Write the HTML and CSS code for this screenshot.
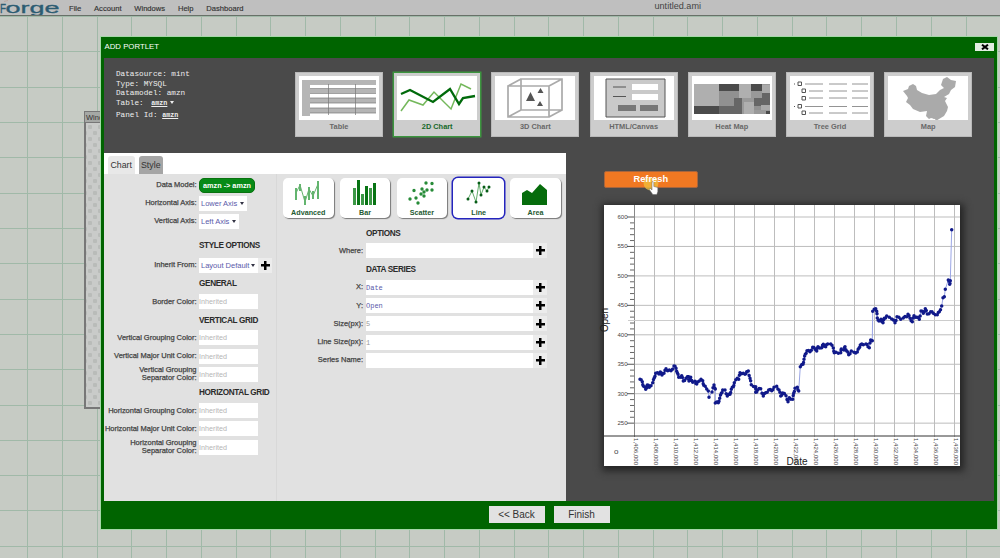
FILE: index.html
```html
<!DOCTYPE html>
<html lang="en">
<head>
<meta charset="utf-8">
<title>untitled.ami</title>
<link rel="stylesheet" href="styles.css">
</head>
<body>
<div class="desktop">
  <header class="menubar">
    <svg class="logo" width="62" height="15" viewBox="0 0 62 15"><text x="0" y="12.500" textLength="6" lengthAdjust="spacingAndGlyphs" class="logo-f">F</text><text x="5.500" y="13" textLength="54" lengthAdjust="spacingAndGlyphs">orge</text><path d="M4 1.500l4-1" stroke="#b87858"/></svg>
    <nav class="menu"><span>File</span><span>Account</span><span>Windows</span><span>Help</span><span>Dashboard</span></nav>
    <span class="doc-name">untitled.ami</span>
  </header>

  <section class="back-window"><div class="back-title">Window</div><div class="back-body"></div></section>

  <main class="dialog">
    <div class="dialog-head"><span>ADD PORTLET</span><button class="close"><svg width="8" height="6" viewBox="0 0 8 6"><path d="M1 .7L7 5.3M7 .7L1 5.3" stroke="#000" stroke-width="2"/></svg></button></div>
    <div class="dialog-body">
      <div class="top">
        <div class="source">
          <div>Datasource: mint</div>
          <div>Type: MYSQL</div>
          <div>Datamodel: amzn</div>
          <div>Table: <b class="table-name">amzn</b> <i class="tri"></i></div>
          <div class="panel-id">Panel Id: <b>amzn</b></div>
        </div>
        <div class="cards">
          <div class="card"><svg viewBox="0 0 80 44"><g fill="#b5b5b5"><path d="M3 4h74v5H3zM3 4h8v36H3zM11 13h66v4H11zM11 22h66v5H11zM11 32h66v5H11z"/></g><path d="M11 12.500h66M11 17.500h66M11 22h66M11 27h66M11 32h66M11 37h66M29.500 8v31M56.500 8v31" stroke="#777" stroke-width=".7"/></svg><span>Table</span></div>
          <div class="card selected"><svg viewBox="0 0 80 44"><g fill="none"><path d="M4 35L12 24L26 29L37 16L54 33L64 8L74 13" stroke="#75b85c" stroke-width="1.500"/><path d="M4 18L13 14L36 26L53 13L62 28L66 22L78 20" stroke="#006a0b" stroke-width="2.300"/></g></svg><span>2D Chart</span></div>
          <div class="card"><svg viewBox="0 0 80 44"><g fill="none" stroke="#aaa" stroke-width="1.700"><path d="M13 10H54V41H13zM26 3H67V34H26zM13 10L26 3M54 10L67 3M13 41L26 34M54 41L67 34"/></g><path d="M31 25l4.500-9 4.500 9zM42.500 17l3-5 3 5zM42 30l3-5 3 5z" fill="#555"/></svg><span>3D Chart</span></div>
          <div class="card"><svg viewBox="0 0 80 44"><path d="M12 3H71V41H12z" fill="#c9c9c9" stroke="#555"/><path d="M38 8h26v6H38zM38 18h26v6H38z" fill="#fff"/><path d="M19 11h13M19 20.500h13" stroke="#555" stroke-width="1.200"/><path d="M24 29h18v6H24zM46 29h18v6H46z" fill="#777"/></svg><span>HTML/Canvas</span></div>
          <div class="card"><svg viewBox="0 0 80 44"><path d="M2 8H78V38H2z" fill="#999"/><path d="M2 8H27V30H2zM47 8H59V22H47zM52 26h10v12H52z" fill="#afafaf"/><path d="M27 8H47V15H27zM59 8H70V15H59zM2 30H27V38H2zM74 35h4v3h-4z" fill="#4b4b4b"/><path d="M27 30H42V22H50V38H27zM62 22H70V17H78V30H62z" fill="#666"/><path d="M27 15h20v7h-5v8H27zM62 30h7v4h-7z" fill="#919191"/><path d="M70 9h8v8h-8zM69 29h9v5h-9z" fill="#aaa"/></svg><span>Heat Map</span></div>
          <div class="card"><svg viewBox="0 0 80 44"><g fill="none" stroke="#555"><path d="M8 6h3.500v3.500H8zM12 13h3.500v3.500H12zM12 20.500h3.500V24H12zM8 28.500h3.500V32H8zM12 35h3.500v3.500H12z"/><path d="M4 8h1M4 30.500h1"/><path d="M15 8h18M39 8h18M62 8h16M19 15h14M39 15h18M62 15h16M19 22h14M39 22h18M62 22h16M15 30.500h18M39 30.500h18M62 30.500h16M19 37h14M39 37h18M62 37h16" stroke="#888" stroke-width=".9"/></g></svg><span>Tree Grid</span></div>
          <div class="card"><svg viewBox="0 0 80 44"><path d="M15 15l5-2 1-3 4-2 3 2 1 4 5 3 7 2 7-1 4-4 4-2-3-3 1-3 1-3 4-2 4 3 5 1-1 6-4 3-2 4-5 3 3 1-2 3 3 6-1 4-3 5-5 3-3 2-1-2-4-1-2 1-3-3 1-5-7 1-7-3-3-4-4-3 2-4-1-2z" fill="#aaa"/><circle cx="46" cy="41.500" r="1.200" fill="#aaa"/></svg><span>Map</span></div>
        </div>
      </div>

      <div class="lower">
        <div class="editor">
          <div class="tabs"><span class="tab active">Chart</span><span class="tab">Style</span></div>
          <div class="forms">
            <div class="form form-left">
              <div class="row"><label>Data Model:</label><span class="pill">amzn -&gt; amzn</span></div>
              <div class="row"><label>Horizontal Axis:</label><span class="select w-lower">Lower Axis<i class="tri"></i></span></div>
              <div class="row"><label>Vertical Axis:</label><span class="select w-leftaxis">Left Axis<i class="tri"></i></span></div>
              <h3 class="first">STYLE OPTIONS</h3>
              <div class="row"><label>Inherit From:</label><span class="select w-layout">Layout Default<i class="tri"></i></span><span class="plus"></span></div>
              <h3>GENERAL</h3>
              <div class="row"><label>Border Color:</label><span class="field color">Inherited</span></div>
              <h3>VERTICAL GRID</h3>
              <div class="row"><label>Vertical Grouping Color:</label><span class="field color">Inherited</span></div>
              <div class="row"><label>Vertical Major Unit Color:</label><span class="field color">Inherited</span></div>
              <div class="row"><label>Vertical Grouping<br>Separator Color:</label><span class="field color">Inherited</span></div>
              <h3>HORIZONTAL GRID</h3>
              <div class="row"><label>Horizontal Grouping Color:</label><span class="field color">Inherited</span></div>
              <div class="row"><label>Horizontal Major Unit Color:</label><span class="field color">Inherited</span></div>
              <div class="row"><label>Horizontal Grouping<br>Separator Color:</label><span class="field color">Inherited</span></div>
            </div>
            <div class="form form-right">
              <div class="types">
                <div class="type"><svg viewBox="0 0 30 26"><path d="M3 9v12M7 5v7M12 17v10M16 8v13M20 12v8M25 2v18" stroke="#3ca34b" stroke-width="1.600"/><path d="M3 14L7 6L12 23L16 10L20 17L25 5" stroke="#65b36e" fill="none"/></svg><span>Advanced</span></div>
                <div class="type"><svg viewBox="0 0 30 26"><path d="M3 9h3v17H3zM11 15h3v11h-3zM19 9h3v17h-3z" fill="#3c9846"/><path d="M7 1h3v25H7zM15 7h3v19h-3zM23 4h3v22h-3z" fill="#087414"/></svg><span>Bar</span></div>
                <div class="type"><svg viewBox="0 0 30 26"><path d="M3 20h0M7 11.500h0M9 19h0M11 24h0M14 15h0M17 13h0M15 10h0M19 4h0M25 4.500h0M20 11h0M25 11h0M17 17h0" stroke="#278b38" stroke-width="3.400" stroke-linecap="round"/></svg><span>Scatter</span></div>
                <div class="type selected"><svg viewBox="0 0 30 26"><path d="M4 20L8 12L12 23L15 4L17 16L20 8L23 12L25 8" fill="none" stroke="#63ad6b"/><path d="M4 20h0M8 12h0M12 23h0M15 4h0M17 16h0M20 8h0M23 12h0M25 8h0" stroke="#075c17" stroke-width="3" stroke-linecap="round"/></svg><span>Line</span></div>
                <div class="type"><svg viewBox="0 0 30 26"><path d="M2 26V14L7 11L12 14L20 5L27 11V26z" fill="#066c0c"/></svg><span>Area</span></div>
              </div>
              <h3 class="options">OPTIONS</h3>
              <div class="row"><label>Where:</label><span class="field wide"></span><span class="plus"></span></div>
              <h3 class="series">DATA SERIES</h3>
              <div class="row"><label>X:</label><span class="field wide">Date</span><span class="plus"></span></div>
              <div class="row"><label>Y:</label><span class="field wide">Open</span><span class="plus"></span></div>
              <div class="row"><label>Size(px):</label><span class="field wide dim">5</span><span class="plus"></span></div>
              <div class="row"><label>Line Size(px):</label><span class="field wide dim">1</span><span class="plus"></span></div>
              <div class="row"><label>Series Name:</label><span class="field wide"></span><span class="plus"></span></div>
            </div>
          </div>
        </div>
        <div class="preview">
          <button class="refresh"><span>Refresh</span><svg class="cursor" width="20" height="20" viewBox="0 0 20 20"><circle cx="8" cy="5" r="7.500" fill="#f2c23c" opacity=".75"/><path d="M9 4q1.500-1 1.800.5v4l4 1v4l-1 3h-4l-3.500-5 1-1 1.700 1.500z" fill="#fff" stroke="#666" stroke-width=".5"/></svg></button>
          <svg class="chart" id="chart" width="356" height="261" viewBox="604 205 356 261"></svg>
        </div>
      </div>
    </div>
    <footer class="dialog-foot"><button>&lt;&lt; Back</button><button>Finish</button></footer>
  </main>
</div>
<script src="chart.js"></script>
</body>
</html>
```
FILE: styles.css
```css
* { box-sizing: border-box; }
body { margin: 0; font-family: "Liberation Sans", Arial, sans-serif; font-size: 7.5px; color: #333; }
button { border: 0; padding: 0; font: inherit; color: inherit; }
.desktop {
  position: relative; width: 1000px; height: 558px; overflow: hidden;
  background:
    repeating-linear-gradient(90deg, #a0b9a8 0 1px, transparent 1px 34.76px) 27.300px 0,
    repeating-linear-gradient(180deg, #a0b9a8 0 1px, transparent 1px 35.32px) 0 16px,
    #c6cbc4;
  background-repeat: no-repeat;
  background-size: 1000px 558px;
}
.menubar { display: flex; height: 16px; background: #bfbfbf; border-bottom: 1px solid #687068; }
.logo { flex: none; font-size: 15px; fill: #2c5c72; stroke: #2c5c72; stroke-width: .3px; }
.logo-f { font-size: 13px; }
.menu { display: flex; gap: 12.800px; padding: 3.500px 0 0 7px; line-height: 9px; width: 592.500px; font-size: 7.600px; -webkit-text-stroke: .15px #333; }
.doc-name { font-size: 9.100px; line-height: 13px; color: #444; }

.back-window { position: absolute; left: 84px; top: 111px; width: 40px; height: 298px; background: #a5a8a5; border: 1px solid #777; }
.back-title { height: 10px; padding-left: 1px; line-height: 11px; }
.back-body { height: 286px; border: 1px solid #777; background: radial-gradient(circle at 4px 4px, #b9bcb9 2px, transparent 2.500px) 0 0 / 10px 12px, radial-gradient(circle at 4px 4px, #b9bcb9 2px, transparent 2.500px) 5px 6px / 10px 12px, #c9cbc9; }

.dialog { position: absolute; left: 101px; top: 37px; width: 896px; height: 491.500px; background: #006400; box-shadow: 0 0 0 1px #a5d8a8; display: flex; flex-direction: column; padding: 0 3px; }
.dialog-head { height: 21px; display: flex; justify-content: space-between; align-items: center; padding: 0 0 2px .5px; color: #fff; font-size: 7.800px; }
.close { width: 19px; height: 8px; margin-top: 1px; background: #e2eee2; display: flex; align-items: center; justify-content: center; }
.dialog-body { height: 443px; background: #4a4a4a; display: flex; flex-direction: column; }
.dialog-foot { flex: 1; display: flex; justify-content: center; gap: 9px; padding: 5px 0 0 0; }
.dialog-foot button { width: 56px; height: 17px; background: #e2e2e2; font-size: 10px; }

.top { height: 94.500px; display: flex; }
.source { width: 187px; padding: 12px 0 0 12px; font: 7.700px/9.500px "Liberation Mono", monospace; color: #eee; white-space: nowrap; }
.source b { font-size: 6.700px; line-height: 8px; text-decoration: underline; }
.source .table-name { margin-left: 3px; }
.panel-id { margin-top: 3px; }
.tri { display: inline-block; border: 2px solid transparent; border-top: 3px solid currentColor; border-bottom: 0; vertical-align: 1px; }
.source .tri { margin-left: -2px; }
.cards { display: flex; gap: 10.200px; padding: 14px 0 0 4px; }
.card { width: 88px; height: 65px; padding: 3px 4px 0; background: #cdcdcd; border: 1px solid #b9b9b9; display: flex; flex-direction: column; text-align: center; font-size: 7.400px; font-weight: bold; color: #686868; }
.card svg { width: 80px; height: 44px; margin-left: -1px; background: #fff; flex: none; }
.card span { line-height: 13px; }
.card.selected { border-color: #3c953f; box-shadow: 0 0 0 .5px #3c953f; color: #16682a; }

.lower { flex: 1; display: flex; }
.editor { width: 462px; background: #e1e1e1; }
.tabs { height: 21.500px; background: #fff; display: flex; gap: 3.500px; padding: 3.500px 0 0 3.500px; }
.tab { height: 18px; width: 27.500px; background: #a5a5a5; border-radius: 3px 3px 0 0; text-align: center; font-size: 8.800px; line-height: 19px; }
.tab + .tab { width: 24.500px; }
.tab.active { background: #e8e8e8; }
.forms { display: flex; height: 327px; }
.form-left { width: 173px; padding-top: 2px; border-right: 1px solid #d8d8d8; }
.form-right { width: 288px; padding-top: 4px; }
.row { display: flex; align-items: center; height: 18.200px; }
.row label { flex: none; width: 92.500px; margin-right: 2.500px; display: flex; justify-content: flex-end; text-align: right; line-height: 8px; white-space: nowrap; font-size: 7.500px; letter-spacing: -.02px; color: #3d3d3d; -webkit-text-stroke: .25px #484848; }
.form-right .row label { width: 86px; margin-right: 3px; }
.form h3 { margin: 0; height: 18.200px; padding: 2px 0 0 95px; font-size: 8.200px; line-height: 16px; font-weight: bold; color: #2b2b2b; letter-spacing: -.35px; white-space: nowrap; }
.form h3.first { height: 25.500px; padding-top: 7px; }
.form-right h3 { padding-left: 89px; }
.form h3.options { height: 23.500px; padding-top: 8px; }
.form h3.series { height: 18.700px; padding-top: 2px; }
.pill { height: 15px; width: 56px; border-radius: 5px; background: #078a17; border: 1px solid #08720f; color: #fff; font-size: 7.300px; font-weight: bold; text-align: center; line-height: 13px; }
.select { height: 15px; background: #fff; color: #5a5aaa; font-size: 7.500px; line-height: 15px; padding: 0 3px 0 2px; display: flex; justify-content: space-between; align-items: center; white-space: nowrap; }
.select .tri { color: #334; }
.w-lower { width: 48px; }
.w-leftaxis { width: 40px; }
.w-layout { width: 59px; }
.field { height: 15px; background: #fff; line-height: 15px; }
.color { width: 59px; color: #b5b5b5; font-size: 7.200px; }
.wide { width: 167px; color: #5a5aaa; font: 7px/16px "Liberation Mono", monospace; }
.dim { color: #999; }
.plus { width: 14px; height: 15px; background: linear-gradient(#000, #000) center / 9px 2.500px no-repeat, linear-gradient(#000, #000) center / 2.500px 9px no-repeat, #ececec; }
.types { display: flex; gap: 6.300px; padding-left: 6px; height: 40px; }
.type { width: 50.500px; height: 39.500px; background: #fff; border-radius: 5px; box-shadow: 1px 1px 1px #777; display: flex; flex-direction: column; align-items: center; padding-top: 1px; font-weight: bold; color: #245a31; font-size: 7.200px; }
.type svg { width: 30px; height: 26px; flex: none; }
.type span { line-height: 15px; }
.type.selected { box-shadow: 0 0 0 1.500px #2525bd; }

.preview { padding: 18.500px 0 0 38px; display: flex; flex-direction: column; align-items: flex-start; }
.refresh { position: relative; width: 93.500px; height: 17px; background: #f07822; border: 1px solid #a7653d; border-radius: 2px; color: #fff; font-size: 9.300px; font-weight: bold; line-height: 15px; }
.cursor { position: absolute; left: 38px; top: 6px; }
.refresh span { position: relative; z-index: 1; }
.chart { margin-top: 17px; background: #fff; box-shadow: 1px 2px 7px 3px #252525; overflow: visible; }
.chart .tick { font-size: 6px; fill: #444; }
.chart .origin { font-size: 8px; fill: #444; }
.chart .name { font-size: 10px; fill: #222; }
```
FILE: chart.js
```js
// Each run holds consecutive readings; runs are joined by a thin line only.
const runs = [
  [[640,379.3],[642.3,381.7],[643.3,386],[645.7,389.3],[647.3,385],[649.3,387.3],[652.7,382.7],[654.3,377.7],[655.7,373.3],[659,374],[660.3,372],[662,375],[664,373.3],[666,368.7],[667.7,370.7],[671,370.7],[674,366],[676,368.3],[677.3,372.7],[678.7,377.3],[681.7,375.7],[683.3,381],[686,378.3],[688.7,376.7],[689,381],[690.7,377.3],[692.7,382.3],[695,381.3],[696.7,384],[699.3,381],[701,379.3],[702.7,380.7],[703.7,385.3],[706.7,389],[708.3,391]],
  [[709,397.3]],
  [[712,392],[714,385],[715.3,389]],
  [[715.3,403],[718.3,402.7],[719.7,398.3],[721.3,393.3],[722.7,390],[725,390],[727.3,396],[730,394.3],[731.3,389.3],[733.3,386.7],[734.3,382.7],[737.3,378.3],[738.7,379.3],[740,372.7],[743.3,373.3],[745,374.3],[746.7,371.7],[748.3,371],[750,378.3],[751.3,384.7],[755.7,386.7],[755.7,392.3],[757.7,390],[760.7,388.7],[763.3,396],[765.7,392.7],[768.7,390],[771.7,390.7],[774,387.3],[776.7,386.3],[779,390],[780.7,396],[782.7,393],[786,395.7],[788,401.7],[789.3,397.7],[792.7,399.3],[793.7,393.3],[795,388.3],[797.3,387.3],[798.7,391]],
  [[800.3,366.7],[803,364.3],[804,359.3],[805.3,354.3],[807,350.7],[810,351.7],[812.7,347.3],[815,349.3],[816.7,351],[818,346.7],[821.7,347.7],[823.3,344.3],[825.7,346.7],[827.7,344],[830.7,344],[833.3,348],[834.3,352.7],[836,352.3],[840.7,352.7],[841.3,349],[844,350],[845,346.7],[846.7,351],[848.7,354.7],[851.3,351],[854,352.3],[857.3,352],[859,348],[860.3,345],[863.3,344.7],[866,344],[868,346.7],[869.3,347.7],[870.7,340],[872.3,340.7]],
  [[872.7,311.3],[875.7,308.7],[876.7,311.3],[877.3,318],[879,321],[881,319.3],[883,322.7],[884.3,318.3],[886.7,316],[889.3,317.3],[891.7,319],[895,322.7],[897,316.7],[900.7,319.3],[903.3,318],[906.7,316.7],[908,314.3],[910,318.3],[912.3,321.7],[914,315.7],[916.7,317.3],[919.3,319.3],[921,311],[923.3,313.3],[925.3,308.7],[927.3,314],[930.7,311.7],[933.3,313.3],[937.3,314.7],[939.3,311.7],[941.7,306]],
  [[943,297.7],[944.3,296.7]],
  [[945.3,289.3]],
  [[948.3,280],[949.7,284.3],[950.3,280.7]],
  [[951.7,229.7]]
];

let out = '';
for (let i = 0; i < 17; i++) {
  const x = 634.5 + 20 * i;
  const label = '1,' + (406 + 2 * i) + ',000';
  out += `<path d="M${x} 205V437" stroke="#bdbdbd"/>`;
  out += `<text class="tick" transform="translate(${x - 1} 438) rotate(90)" textLength="27">${label}</text>`;
}
for (let i = 0; i < 8; i++) {
  const y = 217 + 29.45 * i;
  out += `<path d="M634 ${y}H960" stroke="#bdbdbd"/><path d="M627 ${y}H634" stroke="#555"/>`;
  out += `<text class="tick" x="627.5" y="${y + 2}" text-anchor="end">${600 - 50 * i}</text>`;
  for (let k = 1; k < 5 && i < 7; k++) {
    out += `<path d="M630 ${y + k * 5.89}h4" stroke="#666"/>`;
  }
}
out += '<path d="M634.5 205V437" stroke="#888"/><path d="M628 320.5H960" stroke="#ccc"/>';
out += '<path d="M604 436H960" stroke="#333"/>';

const all = runs.flat();
let dots = '';
for (const run of runs) {
  run.forEach(([x, y], i) => {
    dots += `M${x} ${y}h0`;
    if (i + 1 < run.length) {
      const [nx, ny] = run[i + 1];
      const bump = i % 2 ? 0.8 : -0.8;
      if (Math.hypot(nx - x, ny - y) > 3) dots += `M${(x + nx) / 2} ${(y + ny) / 2 + bump}h0`;
    }
  });
}
out += `<path d="M${all.map(p => p.join(' ')).join('L')}" fill="none" stroke="#9aa5e5"/>`;
out += `<path d="${dots}" stroke="#10198a" stroke-width="3.5" stroke-linecap="round"/>`;
out += '<text class="name" x="786.5" y="464.5" textLength="21">Date</text>';
out += '<text class="name" transform="translate(608 332) rotate(-90)" textLength="24">Open</text>';
out += '<text class="origin" x="614" y="454">o</text>';
document.getElementById('chart').innerHTML = out;
```
